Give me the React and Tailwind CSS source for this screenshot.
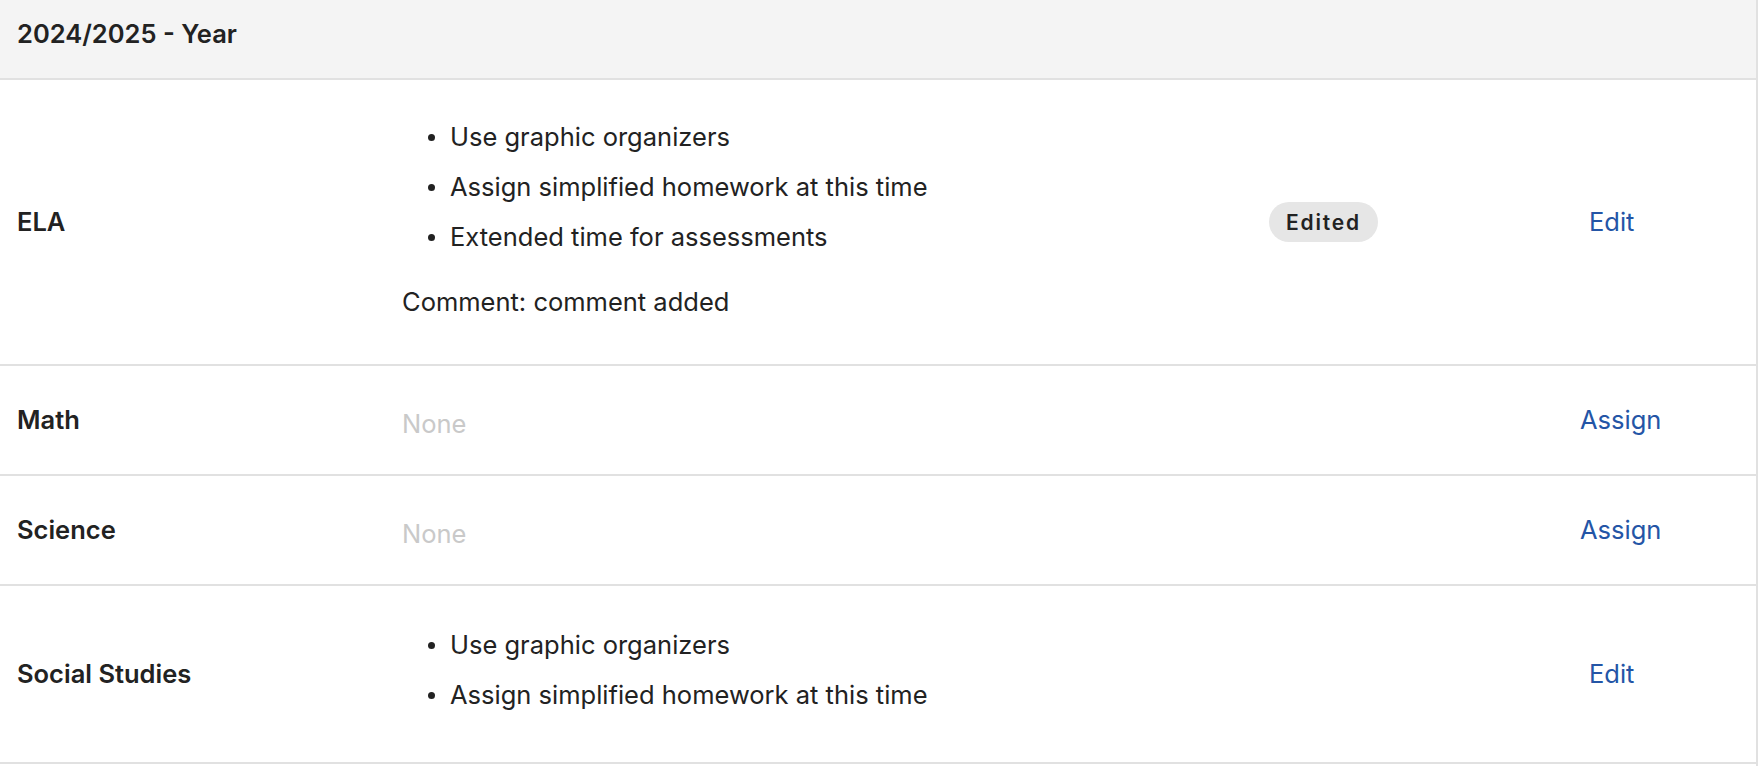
import React from "react";

const font = { fontFamily: "Inter, 'Liberation Sans', sans-serif" };

function Bullets({ items, className = "" }) {
  return (
    <ul className={className}>
      {items.map((t) => (
        <li key={t} className="flex items-center h-[50px]">
          <span className="w-[7px] h-[7px] rounded-full bg-[#222] ml-[26px] mr-[15px] shrink-0" />
          <span>{t}</span>
        </li>
      ))}
    </ul>
  );
}

function Row({ label, children, status, action, actionClass, heightClass }) {
  return (
    <div className={`grid grid-cols-[402px_867px_311px_1fr] items-center border-b-2 border-[#e1e1e1] ${heightClass}`}>
      <div className="pl-[17px] font-semibold text-[#222]">{label}</div>
      <div>{children}</div>
      <div>{status}</div>
      <div className={`text-[#2455a6] ${actionClass}`}>{action}</div>
    </div>
  );
}

export default function App() {
  return (
    <div
      className="w-[1758px] h-[766px] bg-white border-r-2 border-[#e1e1e1] text-[25.5px] text-[#222] antialiased"
      style={font}
    >
      <div className="h-[80px] bg-[#f4f4f4] border-b-2 border-[#e1e1e1] flex items-center pl-[17px] pb-[10px]">
        <span className="font-semibold">2024/2025 - Year</span>
      </div>

      <Row
        label="ELA"
        heightClass="h-[286px]"
        status={
          <span className="inline-flex items-center h-[40px] px-[17px] rounded-full bg-[#e6e6e6] text-[21px] font-semibold tracking-[1.8px] text-[#222]">
            Edited
          </span>
        }
        action="Edit"
        actionClass="pl-[9px]"
      >
        <div className="pb-[14px]">
          <Bullets
            className="pt-[10px]"
            items={[
              "Use graphic organizers",
              "Assign simplified homework at this time",
              "Extended time for assessments",
            ]}
          />
          <div className="h-[50px] flex items-center mt-[15px]">Comment: comment added</div>
        </div>
      </Row>

      <Row label="Math" heightClass="h-[110px]" action="Assign" actionClass="">
        <div className="text-[#c9c9c9] pt-[8px]">None</div>
      </Row>

      <Row label="Science" heightClass="h-[110px]" action="Assign" actionClass="">
        <div className="text-[#c9c9c9] pt-[8px]">None</div>
      </Row>

      <Row label="Social Studies" heightClass="h-[178px]" action="Edit" actionClass="pl-[9px]">
        <Bullets className="pb-[8px]" items={["Use graphic organizers", "Assign simplified homework at this time"]} />
      </Row>
    </div>
  );
}
